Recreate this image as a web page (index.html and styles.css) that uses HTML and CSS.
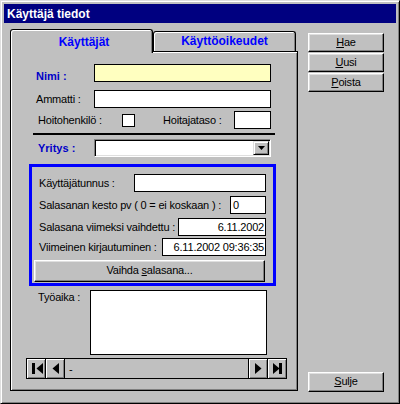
FILE: index.html
```html
<!DOCTYPE html>
<html lang="fi">
<head>
<meta charset="utf-8">
<title>Käyttäjä tiedot</title>
<link rel="stylesheet" href="styles.css">
</head>
<body>
<div class="window">
  <div class="titlebar">Käyttäjä tiedot</div>
  <div class="client">
    <div class="tabctl">
      <div class="tabstrip">
        <div class="tab active">Käyttäjät</div>
        <div class="tab inactive">Käyttöoikeudet</div>
      </div>
      <div class="panel">
        <div class="row r-nimi">
          <span class="lbl bl w58 low">Nimi :</span>
          <div class="field yellow w177"></div>
        </div>
        <div class="row r-amm">
          <span class="lbl w58">Ammatti :</span>
          <div class="field w177"></div>
        </div>
        <div class="row r-hoito">
          <span class="lbl w84">Hoitohenkilö :</span>
          <div class="check"></div>
          <span class="lbl w71 ml28">Hoitajataso :</span>
          <div class="field w37"></div>
        </div>
        <div class="sep"></div>
        <div class="row r-yritys">
          <span class="lbl bl w56">Yritys :</span>
          <div class="combo">
            <div class="dropbtn">
              <svg width="7" height="4" viewBox="0 0 7 4"><polygon points="0,0 7,0 3.5,4" fill="#000"/></svg>
            </div>
          </div>
        </div>
        <div class="bluebox">
          <div class="brow m7">
            <span class="lbl">Käyttäjätunnus :</span>
            <div class="field bf w132"></div>
          </div>
          <div class="brow m4">
            <span class="lbl">Salasanan kesto pv ( 0 = ei koskaan ) :</span>
            <div class="field bf w36">0</div>
          </div>
          <div class="brow m4">
            <span class="lbl">Salasana viimeksi vaihdettu :</span>
            <div class="field bf w88 right">6.11.2002</div>
          </div>
          <div class="brow m2">
            <span class="lbl">Viimeinen kirjautuminen :</span>
            <div class="field bf w104 right">6.11.2002 09:36:35</div>
          </div>
          <div class="btn vbtn">Vaihda <u>s</u>alasana...</div>
        </div>
        <div class="trow">
          <span class="lbl w52 tlbl">Työaika :</span>
          <div class="field w177 tall"></div>
        </div>
        <div class="nav">
          <div class="navbtn nl">
            <svg width="18" height="19" viewBox="0 0 18 19"><rect x="5" y="4" width="3" height="11" fill="#000"/><polygon points="9.5,9.5 16,4 16,15" fill="#000"/></svg>
          </div>
          <div class="navbtn nl">
            <svg width="18" height="19" viewBox="0 0 18 19"><polygon points="6.5,9.5 13,4 13,15" fill="#000"/></svg>
          </div>
          <span class="navtext">-</span>
          <div class="navbtn nr push">
            <svg width="18" height="19" viewBox="0 0 18 19"><polygon points="6,4 6,15 12.5,9.5" fill="#000"/></svg>
          </div>
          <div class="navbtn nr">
            <svg width="18" height="19" viewBox="0 0 18 19"><polygon points="5,4 5,15 11.5,9.5" fill="#000"/><rect x="11" y="4" width="3" height="11" fill="#000"/></svg>
          </div>
        </div>
      </div>
    </div>
    <div class="buttons">
      <div class="btn"><u>H</u>ae</div>
      <div class="btn"><u>U</u>usi</div>
      <div class="btn"><u>P</u>oista</div>
      <div class="btn sulje"><u>S</u>ulje</div>
    </div>
  </div>
</div>
</body>
</html>
```
FILE: styles.css
```css
body {
  margin: 0;
  background: #c0c0c0;
  font-family: "Liberation Sans", Arial, sans-serif;
  font-size: 11px;
  letter-spacing: -0.2px;
  color: #000;
}

.window {
  width: 400px;
  height: 404px;
  box-sizing: border-box;
  border: 1px solid;
  border-color: #dfdfdf #000 #000 #dfdfdf;
  box-shadow: inset 1px 1px 0 #fff, inset -1px -1px 0 #808080;
  padding: 3px;
  display: flex;
  flex-direction: column;
  background: #c0c0c0;
}

.titlebar {
  flex: none;
  height: 19px;
  box-sizing: border-box;
  background: #000080;
  color: #fff;
  font-weight: bold;
  font-size: 12px;
  letter-spacing: 0;
  line-height: 18px;
  padding: 1px 0 0 3px;
}

.client {
  flex: 1;
  display: flex;
  padding-left: 6px;
}

.tabctl {
  margin-top: 6px;
  width: 288px;
  height: 362px;
  display: flex;
  flex-direction: column;
}

.tabstrip {
  flex: none;
  height: 22px;
  display: flex;
  align-items: flex-start;
}

.tab {
  box-sizing: border-box;
  width: 143px;
  border: 1px solid #000;
  border-bottom: none;
  border-radius: 3px 3px 0 0;
  box-shadow: inset 1px 1px 0 #fff, inset -1px 0 0 #808080;
  background: #c0c0c0;
  text-align: center;
  color: #0000ff;
  font-weight: bold;
  font-size: 12px;
  letter-spacing: 0;
  white-space: nowrap;
}

.tab.active {
  height: 24px;
  position: relative;
  z-index: 1;
  line-height: 20px;
  padding: 2px 0 0 5px;
}

.tab.inactive {
  height: 20px;
  margin-top: 2px;
  line-height: 18px;
}

.panel {
  box-sizing: border-box;
  height: 340px;
  border: 1px solid #000;
  box-shadow: inset 1px 1px 0 #fff, inset -1px -1px 0 #808080;
  display: flex;
  flex-direction: column;
  align-items: flex-start;
}

.row {
  flex: none;
  display: flex;
  align-items: center;
  height: 18px;
}

.r-nimi { margin: 12px 0 0 25px; }
.r-amm { margin: 8px 0 0 25px; }
.r-hoito { margin: 3px 0 0 27px; }
.r-yritys { margin: 4px 0 0 27px; }

.lbl {
  flex: none;
  white-space: nowrap;
}

.bl {
  font-weight: bold;
  color: #0000c8;
  letter-spacing: 0;
}

.low { padding-top: 6px; }

.w58 { width: 58px; }
.w84 { width: 84px; }
.w71 { width: 71px; }
.w56 { width: 56px; }
.w52 { width: 52px; }
.ml28 { margin-left: 28px; }

.field {
  flex: none;
  box-sizing: border-box;
  height: 18px;
  border: 1px solid #000;
  background: #fff;
  line-height: 16px;
  padding: 0 2px;
  white-space: nowrap;
  overflow: hidden;
}

.yellow { background: #ffffc0; }
.right { text-align: right; padding-right: 1px; }

.w177 { width: 177px; }
.w37 { width: 37px; }
.w132 { width: 132px; }
.w36 { width: 36px; }
.w88 { width: 88px; }
.w104 { width: 104px; }

.check {
  flex: none;
  width: 13px;
  height: 13px;
  box-sizing: border-box;
  border: 1px solid #000;
  background: #fff;
}

.sep {
  flex: none;
  margin: 4px 0 0 22px;
  width: 242px;
  height: 2px;
  background: #000;
}

.combo {
  flex: none;
  box-sizing: border-box;
  width: 177px;
  height: 18px;
  border: 1px solid;
  border-color: #808080 #fff #fff #808080;
  box-shadow: inset 1px 1px 0 #000, inset -1px -1px 0 #dfdfdf;
  background: #fff;
  padding: 1px;
  display: flex;
  justify-content: flex-end;
}

.dropbtn {
  box-sizing: border-box;
  width: 16px;
  height: 14px;
  background: #c0c0c0;
  border: 1px solid;
  border-color: #dfdfdf #000 #000 #dfdfdf;
  box-shadow: inset 1px 1px 0 #fff, inset -1px -1px 0 #808080;
  display: flex;
  align-items: center;
  justify-content: center;
}

.bluebox {
  flex: none;
  box-sizing: border-box;
  width: 247px;
  height: 122px;
  margin: 7px 0 0 18px;
  border: 3px solid #0000ff;
  padding: 0 7px 0 2px;
  display: flex;
  flex-direction: column;
}

.brow {
  display: flex;
  align-items: center;
  height: 18px;
  padding-left: 5px;
}

.bf { margin-left: auto; }

.m7 { margin-top: 7px; }
.m4 { margin-top: 4px; }
.m2 { margin-top: 2px; }

.btn {
  flex: none;
  box-sizing: border-box;
  height: 19px;
  border: 1px solid;
  border-color: #fff #000 #000 #fff;
  box-shadow: inset -1px -1px 0 #808080, inset 1px 1px 0 #dfdfdf;
  background: #c0c0c0;
  text-align: center;
  line-height: 16px;
  white-space: nowrap;
}

.vbtn {
  width: 231px;
  height: 22px;
  margin-top: 4px;
  line-height: 19px;
}

.trow {
  flex: none;
  display: flex;
  align-items: flex-start;
  margin: 4px 0 0 27px;
}

.tlbl { padding-top: 1px; }

.tall { height: 65px; }

.nav {
  flex: none;
  box-sizing: border-box;
  margin: 3px 0 0 15px;
  width: 261px;
  height: 21px;
  border: 1px solid #000;
  display: flex;
  align-items: center;
}

.navbtn {
  flex: none;
  box-sizing: border-box;
  width: 19px;
  height: 19px;
  box-shadow: inset 1px 1px 0 #fff, inset -1px -1px 0 #808080;
  display: flex;
}

.navbtn svg { display: block; }

.nl { border-right: 1px solid #000; }
.nr { border-left: 1px solid #000; }
.push { margin-left: auto; }

.navtext { margin-left: 4px; }

.buttons {
  margin: 6px 0 0 10px;
  width: 76px;
  height: 363px;
  box-sizing: border-box;
  padding-top: 4px;
  display: flex;
  flex-direction: column;
  gap: 1px;
}

.sulje {
  margin-top: auto;
  height: 20px;
  line-height: 17px;
}
```
